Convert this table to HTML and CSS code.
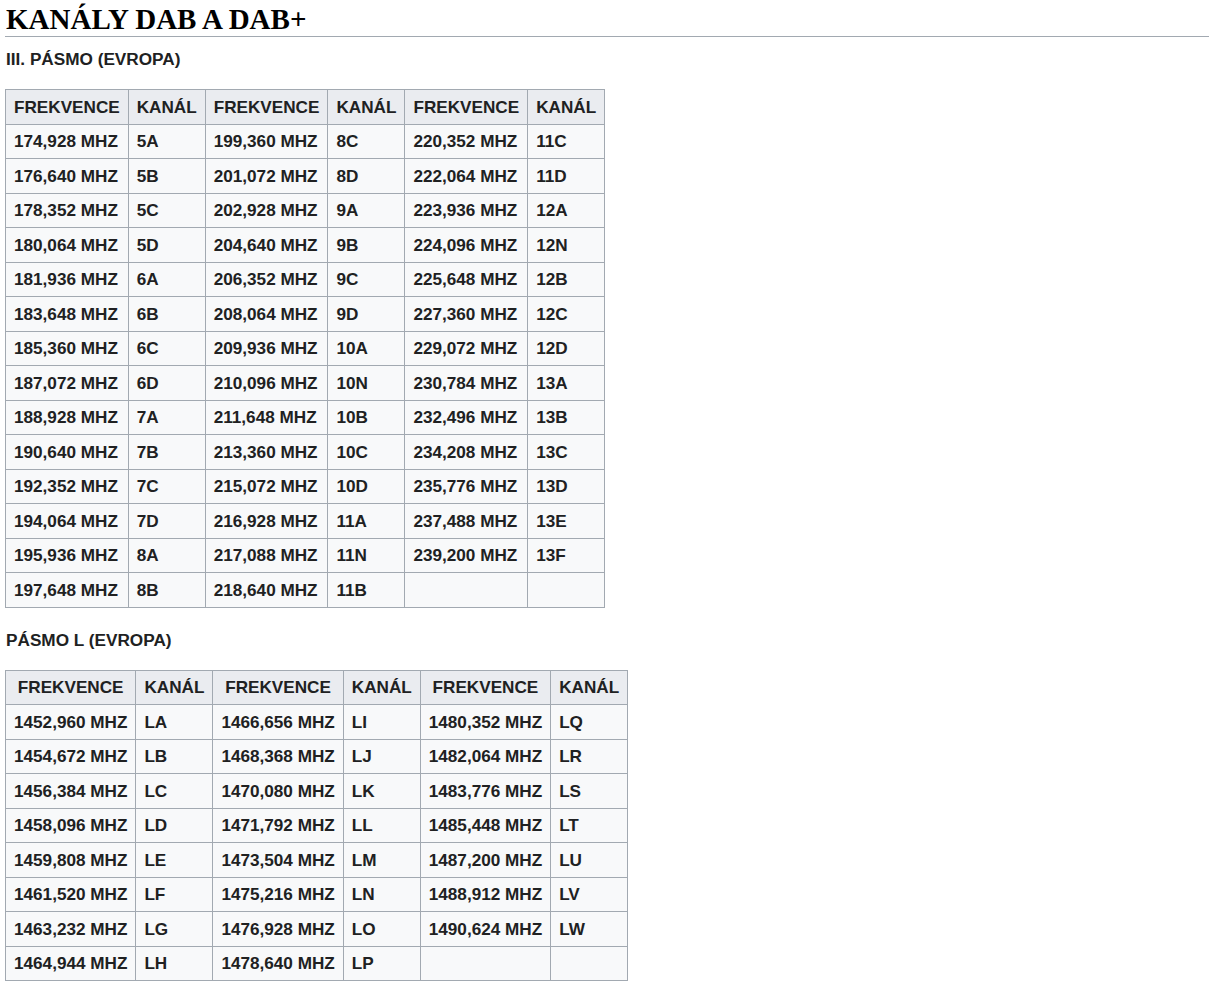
FILE: index.html
```html
<!DOCTYPE html>
<html lang="cs">
<head>
<meta charset="utf-8">
<title>Kanály DAB a DAB+</title>
<link rel="stylesheet" href="styles.css">
</head>
<body>
<div class="page">
  <h2 class="title">KANÁLY DAB A DAB+</h2>
  <h3 class="sub sub-first">III. PÁSMO (EVROPA)</h3>
  <table class="wikitable">
    <thead>
      <tr><th>FREKVENCE</th><th>KANÁL</th><th>FREKVENCE</th><th>KANÁL</th><th>FREKVENCE</th><th>KANÁL</th></tr>
    </thead>
    <tbody>
      <tr><td>174,928 MHZ</td><td>5A</td><td>199,360 MHZ</td><td>8C</td><td>220,352 MHZ</td><td>11C</td></tr>
      <tr><td>176,640 MHZ</td><td>5B</td><td>201,072 MHZ</td><td>8D</td><td>222,064 MHZ</td><td>11D</td></tr>
      <tr><td>178,352 MHZ</td><td>5C</td><td>202,928 MHZ</td><td>9A</td><td>223,936 MHZ</td><td>12A</td></tr>
      <tr><td>180,064 MHZ</td><td>5D</td><td>204,640 MHZ</td><td>9B</td><td>224,096 MHZ</td><td>12N</td></tr>
      <tr><td>181,936 MHZ</td><td>6A</td><td>206,352 MHZ</td><td>9C</td><td>225,648 MHZ</td><td>12B</td></tr>
      <tr><td>183,648 MHZ</td><td>6B</td><td>208,064 MHZ</td><td>9D</td><td>227,360 MHZ</td><td>12C</td></tr>
      <tr><td>185,360 MHZ</td><td>6C</td><td>209,936 MHZ</td><td>10A</td><td>229,072 MHZ</td><td>12D</td></tr>
      <tr><td>187,072 MHZ</td><td>6D</td><td>210,096 MHZ</td><td>10N</td><td>230,784 MHZ</td><td>13A</td></tr>
      <tr><td>188,928 MHZ</td><td>7A</td><td>211,648 MHZ</td><td>10B</td><td>232,496 MHZ</td><td>13B</td></tr>
      <tr><td>190,640 MHZ</td><td>7B</td><td>213,360 MHZ</td><td>10C</td><td>234,208 MHZ</td><td>13C</td></tr>
      <tr><td>192,352 MHZ</td><td>7C</td><td>215,072 MHZ</td><td>10D</td><td>235,776 MHZ</td><td>13D</td></tr>
      <tr><td>194,064 MHZ</td><td>7D</td><td>216,928 MHZ</td><td>11A</td><td>237,488 MHZ</td><td>13E</td></tr>
      <tr><td>195,936 MHZ</td><td>8A</td><td>217,088 MHZ</td><td>11N</td><td>239,200 MHZ</td><td>13F</td></tr>
      <tr><td>197,648 MHZ</td><td>8B</td><td>218,640 MHZ</td><td>11B</td><td></td><td></td></tr>
    </tbody>
  </table>
  <h3 class="sub sub-second">PÁSMO L (EVROPA)</h3>
  <table class="wikitable">
    <thead>
      <tr><th>FREKVENCE</th><th>KANÁL</th><th>FREKVENCE</th><th>KANÁL</th><th>FREKVENCE</th><th>KANÁL</th></tr>
    </thead>
    <tbody>
      <tr><td>1452,960 MHZ</td><td>LA</td><td>1466,656 MHZ</td><td>LI</td><td>1480,352 MHZ</td><td>LQ</td></tr>
      <tr><td>1454,672 MHZ</td><td>LB</td><td>1468,368 MHZ</td><td>LJ</td><td>1482,064 MHZ</td><td>LR</td></tr>
      <tr><td>1456,384 MHZ</td><td>LC</td><td>1470,080 MHZ</td><td>LK</td><td>1483,776 MHZ</td><td>LS</td></tr>
      <tr><td>1458,096 MHZ</td><td>LD</td><td>1471,792 MHZ</td><td>LL</td><td>1485,448 MHZ</td><td>LT</td></tr>
      <tr><td>1459,808 MHZ</td><td>LE</td><td>1473,504 MHZ</td><td>LM</td><td>1487,200 MHZ</td><td>LU</td></tr>
      <tr><td>1461,520 MHZ</td><td>LF</td><td>1475,216 MHZ</td><td>LN</td><td>1488,912 MHZ</td><td>LV</td></tr>
      <tr><td>1463,232 MHZ</td><td>LG</td><td>1476,928 MHZ</td><td>LO</td><td>1490,624 MHZ</td><td>LW</td></tr>
      <tr><td>1464,944 MHZ</td><td>LH</td><td>1478,640 MHZ</td><td>LP</td><td></td><td></td></tr>
    </tbody>
  </table>
</div>
</body>
</html>
```
FILE: styles.css
```css
html, body {
  margin: 0;
  padding: 0;
  background: #ffffff;
}

.page {
  padding: 3px 14px 0 5px;
  color: #202122;
}

.title {
  margin: 0;
  padding: 0 0 1px 1px;
  font-family: "Liberation Serif", "Times New Roman", serif;
  font-size: 29px;
  line-height: 32px;
  font-weight: bold;
  color: #000000;
  border-bottom: 1px solid #a2a9b1;
}

.sub {
  margin: 0;
  padding-left: 1px;
  font-family: "Liberation Sans", Arial, sans-serif;
  font-size: 17.2px;
  line-height: 20px;
  font-weight: bold;
  color: #202122;
}

.sub-first {
  margin-top: 12px;
  margin-bottom: 20px;
}

.sub-second {
  margin-top: 22px;
  margin-bottom: 20px;
}

.wikitable {
  border-collapse: collapse;
  border: 1px solid #a2a9b1;
  background: #f8f9fa;
  font-family: "Liberation Sans", Arial, sans-serif;
  font-size: 17.15px;
  line-height: 20px;
  font-weight: bold;
  color: #202122;
}

.wikitable th,
.wikitable td {
  border: 1px solid #a2a9b1;
  padding: 6.75px 8px;
  white-space: nowrap;
}

.wikitable th {
  background: #eaecf0;
  text-align: center;
  font-weight: bold;
}

.wikitable td {
  text-align: left;
}
```
